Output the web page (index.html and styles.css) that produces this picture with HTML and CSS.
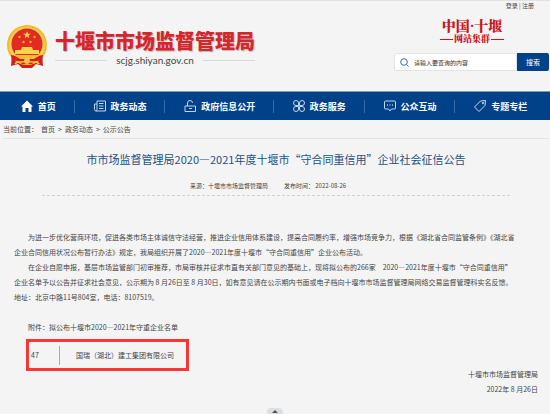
FILE: index.html
```html
<!DOCTYPE html>
<html lang="zh-CN">
<head>
<meta charset="utf-8">
<meta name="viewport" content="width=device-width, initial-scale=1">
<title>十堰市市场监督管理局</title>
<link rel="stylesheet" href="styles.css">
</head>
<body>
<header class="header">
  <div class="brand">
    <svg class="emblem" viewBox="0 0 40 43" aria-hidden="true">
      <path d="M5 30 L4 41 L11 39 L15 43 H25 L29 39 L36 41 L35 30Z" fill="#d3201c"/>
      <circle cx="20" cy="20" r="20" fill="#f3b932"/>
      <circle cx="20" cy="20" r="18" fill="#f9cf50"/>
      <circle cx="20" cy="19" r="15.5" fill="#e12a20"/>
      <path d="M20 6l1 2.700h2.800l-2.200 1.700.8 2.800-2.400-1.700-2.400 1.700.8-2.800-2.200-1.700H19z" fill="#fbd34c"/>
      <g fill="#f8a93c"><circle cx="12.500" cy="12" r="1.200"/><circle cx="27.500" cy="12" r="1.200"/><circle cx="16.500" cy="17" r="1.200"/><circle cx="23.500" cy="17" r="1.200"/></g>
      <path d="M15 22h10l1 3h6v4H8v-4h6z" fill="#fbd34c"/>
      <path d="M4 30c5 0 8 5 16 2 8 3 11-2 16-2l-1 7c-5-3-8 0-10 2H15c-2-2-5-5-10-2z" fill="#d3201c"/>
      <path d="M7 30h26l-6 4H13z" fill="#f6bd38"/>
      <path d="M8 39c3-5 7 1 12-4 5 5 9-1 12 4" fill="none" stroke="#f9c843" stroke-width="1.500"/>
      <circle cx="20" cy="36" r="3" fill="#f8c43e"/>
    </svg>
    <div class="brand-text">
      <h1 class="brand-name">十堰市市场监督管理局</h1>
      <div class="brand-url">scjg.shiyan.gov.cn</div>
    </div>
  </div>
  <div class="tools">
    <div class="account"><a href="#">登录</a> | <a href="#">注册</a></div>
    <div class="group">
      <div class="group-name">中国·十堰</div>
      <div class="group-sub">网站集群</div>
    </div>
    <form class="search">
      <label class="search-field">
        <svg class="search-icon" viewBox="0 0 9 9" aria-hidden="true"><circle cx="4" cy="4" r="3.300"/><path d="M6.500 6.500L8.500 8.500"/></svg>
        <input type="text" placeholder="请输入要查询的内容" aria-label="搜索内容">
      </label>
      <button type="submit">搜索</button>
    </form>
  </div>
</header>
<nav class="nav">
  <a href="#"><svg viewBox="0 0 12 12"><path class="solid" d="M6 0.500L0 6.500h1.500V12h3V8h3v4h3V6.500H12z"/></svg>首页</a>
  <a href="#"><svg viewBox="0 0 12 12"><path d="M3 1h8.500v10H2Q.5 11 .5 9.500V4H3zM3 4v5.500Q3 11 2 11M5 3.500h4.500M5 6h4.500M5 8.500h4.500"/></svg>政务动态</a>
  <a href="#"><svg viewBox="0 0 12 12"><path d="M1 6h10.500v5.500H1zM3.500 6V3Q3.500 .5 6 .5T8.500 3M5 8.500h3"/></svg>政府信息公开</a>
  <a href="#"><svg viewBox="0 0 12 12"><path d="M5.500 5.500H3A2.500 2.500 0 1 1 5.500 3zM6.500 5.500V3A2.500 2.500 0 1 1 9 5.500zM5.500 6.500V9A2.500 2.500 0 1 1 3 6.500zM6.500 6.500H9A2.500 2.500 0 1 1 6.500 9z"/></svg>政务服务</a>
  <a href="#"><svg viewBox="0 0 12 12"><path d="M1.500 1h9Q11.500 1 11.500 2v6Q11.500 9 10.500 9H7.500L6 11 4.500 9h-3Q.5 9 .5 8V2Q.5 1 1.500 1z"/><path class="dots" d="M3 5h1M5.500 5h1M8 5h1"/></svg>公众互动</a>
  <a href="#"><svg viewBox="0 0 12 12"><path d="M.5 7L6.500 1 11.500.5 11 5.500 5 11.500z"/><circle cx="9" cy="3" r="0.800"/></svg>专题专栏</a>
</nav>
<div class="crumbs"><span>当前位置：</span><a href="#">首页</a><span>&gt;</span><a href="#">政务动态</a><span>&gt;</span><a href="#">公示公告</a></div>
<main class="article">
  <h2 class="title">市市场监督管理局2020—2021年度十堰市“守合同重信用”企业社会征信公告</h2>
  <div class="meta"><span>来源：十堰市市场监督管理局</span><span>发布时间： 2022-08-26</span></div>
  <div class="content">
    <p>为进一步优化营商环境，促进各类市场主体诚信守法经营，推进企业信用体系建设，提高合同履约率，增强市场竞争力，根据《湖北省合同监管条例》《湖北省<br>企业合同信用状况公布暂行办法》规定，我局组织开展了2020—2021年度十堰市“守合同重信用”企业公布活动。</p>
    <p>在企业自愿申报，基层市场监管部门初审推荐，市局审核并征求市直有关部门意见的基础上，现将拟公布的266家　2020—2021年度十堰市“守合同重信用”<br>企业名单予以公告并征求社会意见，公示期为 8 月26日至 8 月30日，如有意见请在公示期内书面或电子档向十堰市市场监督管理局网络交易监督管理科实名反馈。<br>地址：北京中路11号804室，电话：8107519。</p>
    <p class="attachment">附件：拟公布十堰市2020—2021年守重企业名单</p>
    <table class="list"><tbody><tr><td class="num">47</td><td class="company">国瑞（湖北）建工集团有限公司</td></tr></tbody></table>
    <div class="sign">十堰市市场监督管理局<br>2022年 8 月26日</div>
  </div>
</main>
<footer class="footer"><button class="tab" type="button" aria-label="展开"><svg viewBox="0 0 6 3"><path d="M0 3L3 0l3 3z"/></svg></button></footer>
</body>
</html>
```
FILE: styles.css
```css
* { box-sizing: border-box; }
body {
  margin: 0;
  min-height: 100vh;
  display: flex;
  flex-direction: column;
  background: #f4f4f4;
  color: #444;
  font: 7px/15px "Noto Sans CJK SC", "Noto Sans", sans-serif;
}
a { color: inherit; text-decoration: none; }
h1, h2, p { margin: 0; }

.header {
  display: flex;
  justify-content: space-between;
  height: 91px;
  border-top: 1px solid #e2e2e2;
}
.brand { display: flex; gap: 8px; padding: 24px 0 0 7px; }
.emblem { width: 40px; height: 43px; }
.brand-text { padding-top: 2px; }
.brand-name {
  color: #d7262b;
  font-size: 20px;
  line-height: 28px;
  font-weight: 900;
  text-shadow: 1px 1px 1px #bbb;
}
.brand-url {
  display: flex;
  align-items: center;
  gap: 9px;
  color: #444;
  font: 10px/10px Lato, sans-serif;
}
.brand-url::before, .brand-url::after {
  content: "";
  flex: 1;
  height: 1px;
  background: #d8d8d8;
}

.tools { width: 156px; padding-right: 1px; }
.account { padding-right: 15px; font-size: 6px; line-height: 10px; text-align: right; }
.group {
  width: 64px;
  margin: 8px 0 0 46px;
  color: #c9151b;
  font-family: "Liberation Serif", "Noto Serif CJK SC", "Noto Sans CJK SC", serif;
  font-weight: 900;
  text-align: center;
  white-space: nowrap;
}
.group-name { font-size: 14px; line-height: 15px; }
.group-sub { display: flex; align-items: center; gap: 1px; font-size: 9px; line-height: 11px; }
.group-sub::before, .group-sub::after { content: ""; flex: 1; height: 1px; background: #c9151b; }
.search { display: flex; height: 18px; margin-top: 8px; }
.search-field {
  flex: 1;
  display: flex;
  align-items: center;
  gap: 5px;
  padding-left: 5px;
  background: #fff;
  border: 1px solid #e4e4e4;
  border-radius: 2px 0 0 2px;
}
.search-icon { width: 9px; height: 9px; fill: none; stroke: #2e6bc0; stroke-width: 1; }
.search input {
  flex: 1;
  min-width: 0;
  padding: 0;
  border: 0;
  outline: 0;
  background: none;
  color: #333;
  font: inherit;
  font-size: 6px;
}
.search input::placeholder { color: #333; opacity: 1; }
.search button {
  width: 32px;
  padding: 0;
  border: 0;
  border-radius: 0 2px 2px 0;
  background: #00418a;
  color: #fff;
  font: inherit;
}

.nav {
  display: flex;
  height: 29px;
  padding: 0 4px 0 2px;
  background: #00418a;
  border-top: 1px solid #7d9dac;
}
.nav a {
  flex: 1 1 auto;
  display: flex;
  align-items: center;
  justify-content: center;
  gap: 5px;
  color: #fff;
  font-size: 9px;
  font-weight: 700;
  background: linear-gradient(#3a6aa5, #3a6aa5) right center / 1px 13px no-repeat;
}
.nav a:last-child { background: none; }
.nav svg { width: 12px; height: 12px; fill: none; stroke: #c6d6e8; stroke-width: 1; }
.nav .solid { fill: #fff; stroke: none; }
.nav .dots { stroke: #fff; }

.crumbs {
  display: flex;
  gap: 3px;
  margin: 0 1px 0 3px;
  padding: 2px 0 1px;
  border-bottom: 1px solid #e4e4e4;
}
.article { flex: 1; padding: 0 12px 0 14px; }
.title {
  padding-top: 10px;
  color: #1d5184;
  font-size: 11px;
  line-height: 20px;
  font-weight: 400;
  text-align: center;
  white-space: nowrap;
}
.meta {
  display: flex;
  justify-content: center;
  gap: 16px;
  margin: 0 28px;
  padding: 9px 16px 2px 0;
  border-bottom: 1px dashed #d2d2d2;
  font-size: 6px;
}
.content { padding-top: 34px; white-space: nowrap; }
.content p { text-indent: 2em; }
.content .attachment { padding-top: 15px; }
.list {
  width: 163px;
  margin: 4px 0 0 12px;
  border: 3px solid #fb3434;
  border-spacing: 0;
}
.list td { height: 26px; padding: 0; }
.list .num { width: 31px; padding-left: 2px; background: linear-gradient(#aaa, #aaa) right center / 1px 19px no-repeat; }
.list .company { padding-left: 16px; }
.sign { margin-top: -4px; text-align: right; }
.footer { display: flex; justify-content: center; }
.tab {
  width: 16px;
  height: 6px;
  padding: 0;
  border: 0;
  border-radius: 4px 4px 0 0;
  background: #dedfe1;
  display: flex;
  align-items: center;
  justify-content: center;
}
.tab svg { width: 6px; height: 3px; fill: #555; }
```
